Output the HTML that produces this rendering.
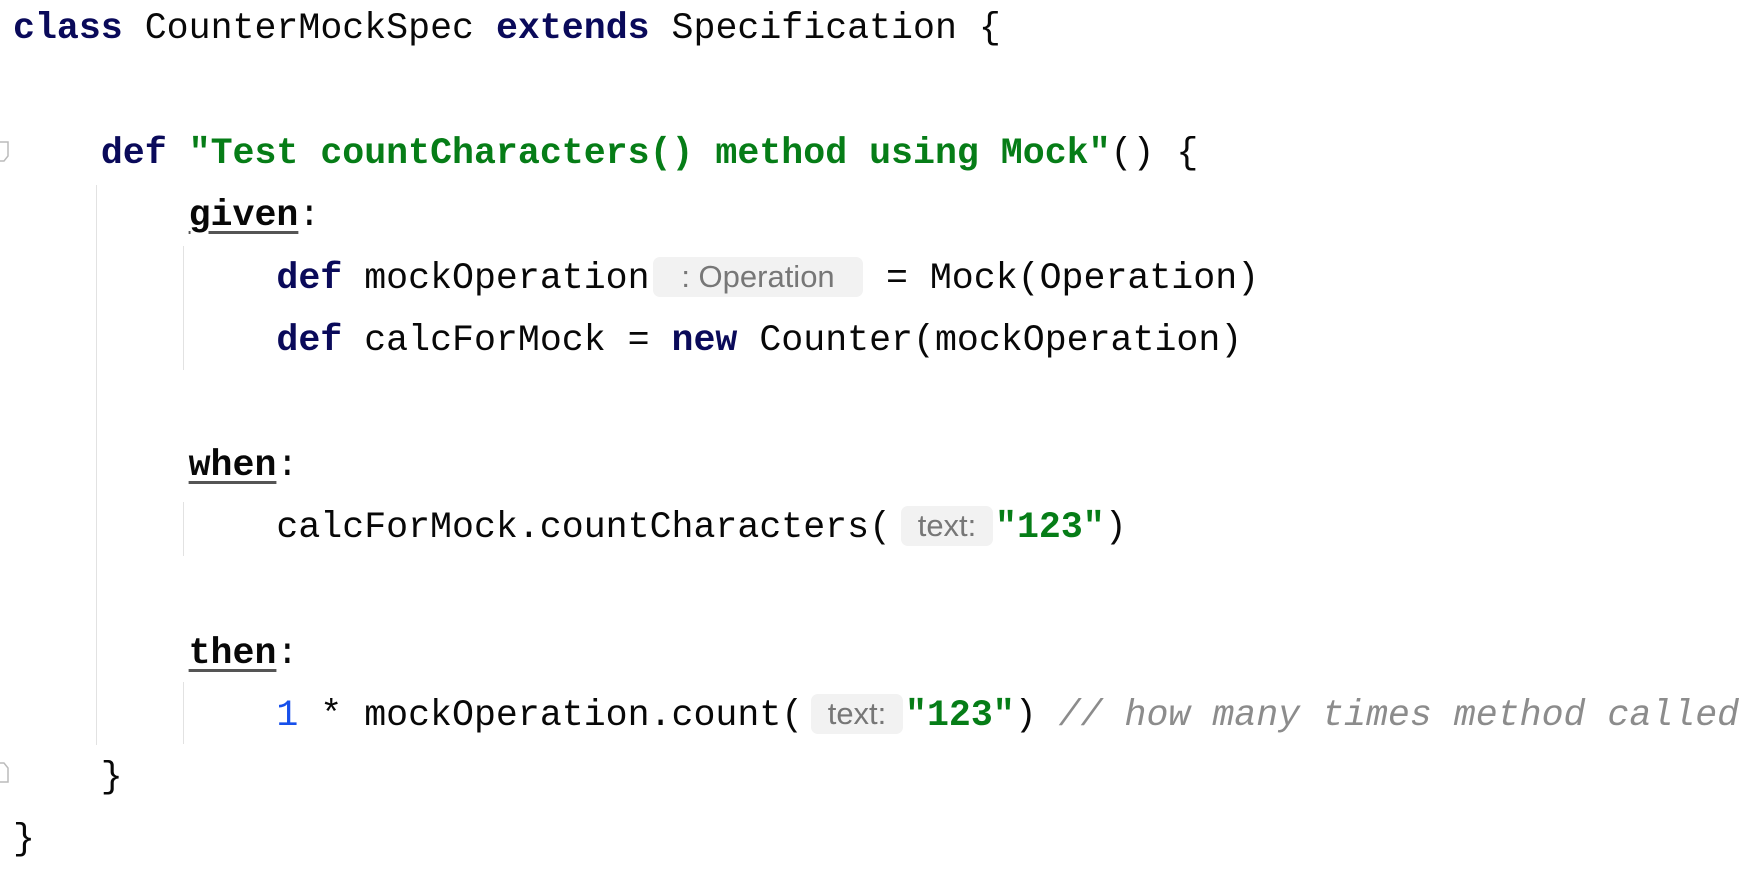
<!DOCTYPE html>
<html><head><meta charset="utf-8"><style>
html,body{margin:0;padding:0;background:#fff;width:1754px;height:862px;overflow:hidden}
.l{position:absolute;left:13px;height:62px;line-height:62px;font-family:"Liberation Mono",monospace;font-size:36.6px;color:#080808;white-space:pre}
.k{color:#0a0a5a;font-weight:bold}
.s{color:#067d17;font-weight:bold}
.n{color:#1750eb}
.c{color:#8c8c8c;font-style:italic}
.lb{font-weight:bold;text-decoration:underline;text-decoration-color:#555;text-underline-offset:6px}
.h{position:absolute;background:#f2f2f2;border-radius:7px;font-family:"Liberation Sans",sans-serif;font-size:31px;color:#777;height:40px;line-height:40px;text-align:center;box-sizing:border-box}
.g{position:absolute;width:1px;background:#e2e2e2}
</style></head><body>
<div class="g" style="left:96px;top:185px;height:560px"></div>
<div class="g" style="left:183px;top:246px;height:124px"></div>
<div class="g" style="left:183px;top:502px;height:54px"></div>
<div class="g" style="left:183px;top:682px;height:62px"></div>
<svg style="position:absolute;left:0;top:140px" width="10" height="24"><path d="M0 2H8V16L4 21H0" fill="none" stroke="#bbb" stroke-width="1.5"/></svg>
<svg style="position:absolute;left:0;top:760px" width="10" height="24"><path d="M0 22H8V8L4 3H0" fill="none" stroke="#bbb" stroke-width="1.5"/></svg>

<div class="l" style="top:-2px"><span class="k">class</span> CounterMockSpec <span class="k">extends</span> Specification {</div>
<div class="l" style="top:123px">    <span class="k">def</span> <span class="s">"Test countCharacters() method using Mock"</span>() {</div>
<div class="l" style="top:185px">        <span class="lb">given</span>:</div>
<div class="l" style="top:248px">            <span class="k">def</span> mockOperation</div>
<div class="h" style="left:653px;top:257px;width:210px">: Operation</div>
<div class="l" style="left:864px;top:248px"> = Mock(Operation)</div>
<div class="l" style="top:310px">            <span class="k">def</span> calcForMock = <span class="k">new</span> Counter(mockOperation)</div>
<div class="l" style="top:435px">        <span class="lb">when</span>:</div>
<div class="l" style="top:497px">            calcForMock.countCharacters(</div>
<div class="h" style="left:901px;top:506px;width:92px">text:</div>
<div class="l" style="left:995px;top:497px"><span class="s">"123"</span>)</div>
<div class="l" style="top:623px">        <span class="lb">then</span>:</div>
<div class="l" style="top:685px">            <span class="n">1</span> * mockOperation.count(</div>
<div class="h" style="left:811px;top:694px;width:92px">text:</div>
<div class="l" style="left:905px;top:685px"><span class="s">"123"</span>) <span class="c">// how many times method called</span></div>
<div class="l" style="top:747px">    }</div>
<div class="l" style="top:809px">}</div>
</body></html>
